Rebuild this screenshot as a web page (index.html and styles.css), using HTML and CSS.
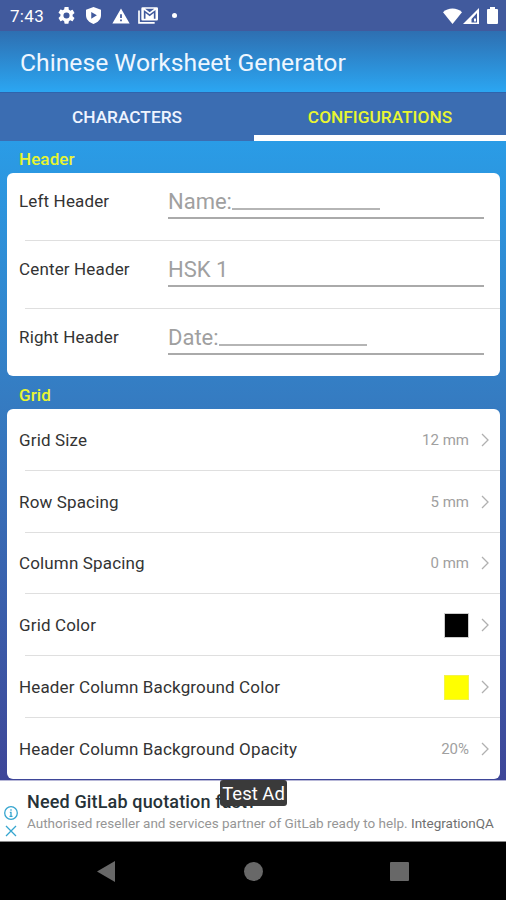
FILE: index.html
```
<!DOCTYPE html>
<html lang="en">
<head>
    <meta charset="UTF-8">
    <title>Chinese Worksheet Generator</title>
    <link rel="stylesheet" href="styles.css">
</head>
<body>
    <div class="screen">
        <div class="status-bar">
            <span class="time">7:43</span>
            <svg class="status-icon gear" viewBox="2 2 20 20"><path d="M19.14 12.94c.04-.3.06-.61.06-.94s-.02-.64-.07-.94l2.03-1.58a.49.49 0 0 0 .12-.61l-1.92-3.32a.49.49 0 0 0-.59-.22l-2.39.96a7 7 0 0 0-1.62-.94l-.36-2.54A.48.48 0 0 0 13.92 2h-3.84a.48.48 0 0 0-.47.41l-.36 2.54c-.59.24-1.13.57-1.62.94l-2.39-.96a.48.48 0 0 0-.59.22L2.73 8.47a.48.48 0 0 0 .12.61l2.03 1.58a6 6 0 0 0 0 1.88L2.85 14.5a.49.49 0 0 0-.12.61l1.92 3.32c.12.22.37.29.59.22l2.39-.96c.5.38 1.03.7 1.62.94l.36 2.54c.05.24.24.41.48.41h3.84c.24 0 .44-.17.47-.41l.36-2.54a7 7 0 0 0 1.62-.94l2.39.96c.22.08.47 0 .59-.22l1.92-3.32a.48.48 0 0 0-.12-.61zM12 15.6a3.6 3.6 0 1 1 0-7.2 3.6 3.6 0 0 1 0 7.2z"/></svg>
            <svg class="status-icon shield" viewBox="2 1 20 22.500"><path fill-rule="evenodd" d="M12 1l10 3.6V12c0 5.6-4.2 9.6-10 11.500C6.200 21.600 2 17.600 2 12V4.600zM9 7.500v9l7.500-4.500z"/></svg>
            <svg class="status-icon warn" viewBox="0 1 24 21"><path fill-rule="evenodd" d="M.5 21.500h23L12 1.500zM13.200 18.500h-2.400v-2.300h2.400zM13.200 14.200h-2.400V9h2.400z"/></svg>
            <svg class="status-icon mail" viewBox="0 0 24 20"><path d="M1.200 4v14.800H20" fill="none" stroke="#fff" stroke-width="2"/><path fill-rule="evenodd" d="M5.500 0H22.500Q24 0 24 1.500V14.500Q24 16 22.500 16H5.500Q4 16 4 14.500V1.500Q4 0 5.500 0zM7 14V3.500l7 5 7-5V14h-2V7l-5 3.800L9 7v7zM8.500 2l5.500 4 5.500-4z"/></svg>
            <span class="dot"></span>
            <div class="signals">
                <svg class="wifi" viewBox="0 0 19 16"><path d="M9.500 16L0 4.200C5-.8 14-.8 19 4.200z"/></svg>
                <svg class="cell" viewBox="0 0 16 16"><path fill-rule="evenodd" d="M16 0v16H0zM14 5l-5.500 6v3.500H14z"/><path d="M11 10.500h2v3h-2z"/></svg>
                <svg class="battery" viewBox="0 0 11 17"><path d="M3 0h5v2h2q1 0 1 1v13q0 1-1 1H1q-1 0-1-1V3q0-1 1-1h2z"/></svg>
            </div>
        </div>

        <div class="app-bar">
            <h1>Chinese Worksheet Generator</h1>
        </div>

        <div class="tabs">
            <div class="tab">CHARACTERS</div>
            <div class="tab active">CONFIGURATIONS</div>
        </div>

        <div class="content">
            <h2>Header</h2>
            <div class="card header-card">
                <div class="row">
                    <span class="label">Left Header</span>
                    <div class="field">Name:<span class="blank"></span></div>
                </div>
                <div class="row">
                    <span class="label">Center Header</span>
                    <div class="field">HSK 1</div>
                </div>
                <div class="row">
                    <span class="label">Right Header</span>
                    <div class="field">Date:<span class="blank"></span></div>
                </div>
            </div>

            <h2 class="grid-title">Grid</h2>
            <div class="card grid-card">
                <div class="row">
                    <span class="label">Grid Size</span>
                    <span class="value">12 mm</span>
                    <svg class="chevron" viewBox="0 0 8 14"><path d="M1 1l6 6-6 6"/></svg>
                </div>
                <div class="row">
                    <span class="label">Row Spacing</span>
                    <span class="value">5 mm</span>
                    <svg class="chevron" viewBox="0 0 8 14"><path d="M1 1l6 6-6 6"/></svg>
                </div>
                <div class="row">
                    <span class="label">Column Spacing</span>
                    <span class="value">0 mm</span>
                    <svg class="chevron" viewBox="0 0 8 14"><path d="M1 1l6 6-6 6"/></svg>
                </div>
                <div class="row">
                    <span class="label">Grid Color</span>
                    <span class="swatch black"></span>
                    <svg class="chevron" viewBox="0 0 8 14"><path d="M1 1l6 6-6 6"/></svg>
                </div>
                <div class="row">
                    <span class="label">Header Column Background Color</span>
                    <span class="swatch yellow"></span>
                    <svg class="chevron" viewBox="0 0 8 14"><path d="M1 1l6 6-6 6"/></svg>
                </div>
                <div class="row">
                    <span class="label">Header Column Background Opacity</span>
                    <span class="value">20%</span>
                    <svg class="chevron" viewBox="0 0 8 14"><path d="M1 1l6 6-6 6"/></svg>
                </div>
            </div>
        </div>

        <div class="ad">
            <div class="ad-icons">
                <svg class="ad-info" viewBox="0 0 14 14"><circle cx="7" cy="7" r="6.300"/><path d="M7 3.200v1.600M5.800 6.300H7v4M5.500 10.400h3"/></svg>
                <svg class="ad-close" viewBox="0 0 12 12"><path d="M1 1l10 10M11 1L1 11"/></svg>
            </div>
            <div class="ad-text">
                <div class="ad-title">Need GitLab quotation fast?</div>
                <div class="ad-desc">Authorised reseller and services partner of GitLab ready to help. <span>IntegrationQA</span></div>
            </div>
            <div class="test-ad">Test Ad</div>
        </div>

        <div class="nav-bar">
            <svg class="back" viewBox="0 0 18 21"><path d="M18 0v21L0 10.500z"/></svg>
            <span class="home"></span>
            <span class="recent"></span>
        </div>
    </div>
</body>
</html>
```
FILE: styles.css
```
:root {
    --yellow: #e9f531;
    --bar: #3b6db2;
    --line: #dfdfdf;
    --hint: #a0a0a0;
}

* {
    margin: 0;
    padding: 0;
    box-sizing: border-box;
}

body {
    font-family: Roboto, "Liberation Sans", sans-serif;
    background: #000;
}

.screen {
    width: 506px;
    height: 900px;
    display: flex;
    flex-direction: column;
    overflow: hidden;
}

/* status bar */
.status-bar {
    height: 31px;
    background: #415a9d;
    display: flex;
    align-items: center;
    padding: 0 8px 0 10px;
    color: #fff;
}

.status-bar svg {
    fill: #fff;
    flex: none;
}

.time {
    width: 48px;
    font-size: 17px;
    letter-spacing: 0.3px;
}

.gear { width: 17px; height: 17px; margin-right: 11px; }
.shield { width: 15px; height: 17px; margin-right: 11px; }
.warn { width: 18px; height: 16px; margin-right: 8px; }
.mail { width: 20px; height: 17px; }

.dot {
    width: 5px;
    height: 5px;
    margin-left: 14px;
    border-radius: 50%;
    background: #fff;
}

.signals {
    display: flex;
    align-items: center;
    margin-left: auto;
}

.wifi { width: 19px; height: 16px; margin-right: 1px; }
.cell { width: 16px; height: 16px; margin-right: 8px; }
.battery { width: 11px; height: 17px; }

/* title */
.app-bar {
    height: 61px;
    padding: 2px 0 0 20px;
    display: flex;
    align-items: center;
    background: linear-gradient(#2e6fb1, #2ba6f2);
    color: #eef6ff;
}

h1 {
    font-size: 24.7px;
    font-weight: 400;
    line-height: 30px;
}

/* tabs */
.tabs {
    height: 49px;
    display: flex;
    background: var(--bar);
    border-top: 1px solid #2f64ad;
}

.tab {
    flex: 1;
    padding-left: 1px;
    text-align: center;
    line-height: 48px;
    font-size: 17.3px;
    font-weight: 500;
    color: #eef4ff;
}

.tab.active {
    color: var(--yellow);
    background: linear-gradient(#fff, #fff) no-repeat 1px 100% / 100% 6px;
}

/* settings */
.content {
    height: 639px;
    padding: 0 6px 0 7px;
    background: linear-gradient(#2a9ce6, #357cc2 40%, #3e4698);
}

h2 {
    height: 32px;
    line-height: 36px;
    padding-left: 12px;
    font-size: 17px;
    font-weight: 500;
    letter-spacing: 0.1px;
    color: var(--yellow);
}

.grid-title {
    height: 33px;
    line-height: 38px;
}

.card {
    background: #fff;
    border-radius: 6px;
}

.header-card {
    height: 203px;
}

.grid-card {
    height: 370px;
}

.row {
    height: 68px;
    display: flex;
    padding: 0 11px 0 12px;
    background: linear-gradient(var(--line), var(--line)) no-repeat 18px 100% / 100% 1px;
}

.row:last-child {
    background: none;
}

.grid-card .row {
    height: 61.8px;
    align-items: center;
}

.label {
    font-size: 17px;
    letter-spacing: 0.15px;
    color: #333;
    white-space: nowrap;
}

.header-card .label {
    width: 149px;
    line-height: 57px;
}

.field {
    width: 316px;
    height: 46px;
    line-height: 58px;
    font-size: 22px;
    color: var(--hint);
    border-bottom: 2px solid #aaa;
    display: flex;
}

.blank {
    width: 148px;
    height: 37px;
    border-bottom: 2px solid #b5b5b5;
}

.value {
    margin-left: auto;
    font-size: 15px;
    color: #a0a0a0;
}

.swatch {
    width: 25px;
    height: 25px;
    margin-left: auto;
    border: 1px solid #ccc;
}

.black { background: #000; }
.yellow { background: #ff0; border-color: #f3f34a; }

.chevron {
    width: 8px;
    height: 14px;
    margin-left: 12px;
    fill: none;
    stroke: #b0b0b0;
    stroke-width: 1.3;
}

/* ad banner */
.ad {
    height: 62px;
    position: relative;
    display: flex;
    background: #fff;
    border-top: 1px solid #b8b8d8;
    border-bottom: 1px solid #888;
}

.ad-icons {
    width: 27px;
    padding: 25px 0 0 4px;
}

.ad-icons svg {
    display: block;
    fill: none;
    stroke: #35a5cf;
    stroke-width: 1.3;
}

.ad-info { width: 14px; height: 14px; }
.ad-close { width: 12px; height: 12px; margin: 5px 0 0 1px; }

.ad-text {
    padding-top: 10px;
    white-space: nowrap;
}

.ad-title {
    font-size: 18px;
    font-weight: 500;
    line-height: 22px;
    letter-spacing: 0.15px;
    color: #263238;
}

.ad-desc {
    font-size: 13.5px;
    line-height: 20px;
    color: #969696;
}

.ad-desc span {
    color: #707070;
}

.test-ad {
    position: absolute;
    top: -1px;
    left: 220px;
    width: 67px;
    height: 26px;
    border-radius: 3px;
    background: #3a3a3a;
    color: #fff;
    font-size: 18.5px;
    line-height: 28px;
    text-align: center;
}

/* system navigation */
.nav-bar {
    flex: 1;
    display: flex;
    justify-content: space-between;
    align-items: center;
    padding: 0 97px;
    background: #000;
}

.back { width: 18px; height: 21px; fill: #686868; }

.home {
    width: 19px;
    height: 19px;
    margin-left: 1px;
    border-radius: 50%;
    background: #686868;
}

.recent {
    width: 19px;
    height: 19px;
    border-radius: 1px;
    background: #686868;
}
```
